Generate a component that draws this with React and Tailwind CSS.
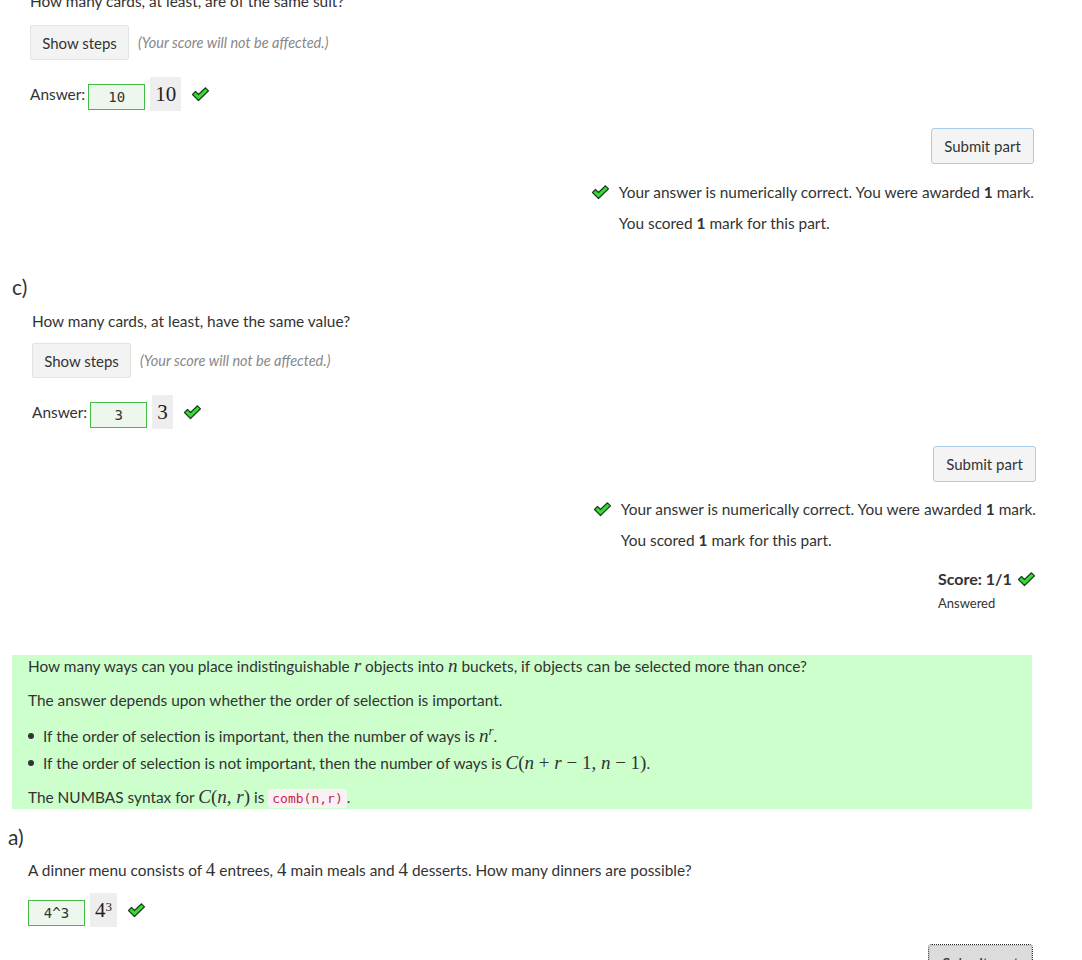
import React from 'react';

function Tick({ className = '' }) {
  return (
    <svg width="19" height="15" viewBox="0 0 19 15" className={className}>
      <polygon
        points="1.5,7.5 4.5,4.5 7.5,7.5 14.5,0.8 17.5,3.8 7.5,13.5"
        fill="#33dd33"
        stroke="#1d3d1d"
        strokeWidth="1.2"
        strokeLinejoin="round"
      />
    </svg>
  );
}

function M({ children }) {
  return <span className="font-['Liberation_Serif',serif] text-[19px] italic leading-none">{children}</span>;
}

function N({ children }) {
  return <span className="font-['Liberation_Serif',serif] text-[19px] leading-none">{children}</span>;
}

function ShowSteps() {
  return (
    <div className="flex items-center">
      <button className="h-[35px] w-[99px] rounded-[2px] border border-[#e3e3e3] bg-[#f3f3f3] text-[15px] text-[#333]">Show steps</button>
      <span className="ml-[9px] text-[14.5px] italic text-[#888]">(Your score will not be affected.)</span>
    </div>
  );
}

function AnswerRow({ value, shown, label = true }) {
  return (
    <div className="flex h-[34px] items-center">
      {label && <span className="mr-[3px]">Answer:</span>}
      <div className="mt-[6px] flex h-[26px] w-[57px] items-center justify-center border border-[#44bb44] bg-[#eef7ee] font-['DejaVu_Sans_Mono',monospace] text-[14px] text-[#333]">
        {value}
      </div>
      <div className="ml-[5px] flex h-[34px] items-center bg-[#eeeeee] px-[5px] font-['Liberation_Serif',serif] text-[21px] text-[#222]">
        {shown}
      </div>
      <Tick className="ml-[10px] mt-[1px]" />
    </div>
  );
}

function SubmitBtn() {
  return (
    <div className="flex justify-end">
      <button className="h-[36px] w-[103px] rounded-[3px] border border-[#a9cde8] bg-[#f4f4f4] text-[15px] text-[#333]">Submit part</button>
    </div>
  );
}

function Feedback() {
  return (
    <div className="flex justify-end">
      <div className="leading-[22px]">
        <div className="flex items-center">
          <Tick className="mr-[9px]" />
          <span>Your answer is numerically correct. You were awarded <b>1</b> mark.</span>
        </div>
        <div className="mt-[9px] pl-[28px]">You scored <b>1</b> mark for this part.</div>
      </div>
    </div>
  );
}

export default function App() {
  return (
    <div className="min-h-[960px] overflow-hidden bg-white font-['Source_Sans_Pro',Lato,sans-serif] text-[15.4px] leading-[22px] text-[#333]">
      {/* part b */}
      <div className="ml-[30px] mt-[-10px] w-[1004px]">
        <p>How many cards, at least, are of the same suit?</p>
        <div className="mt-[13px]"><ShowSteps /></div>
        <div className="mt-[17px]"><AnswerRow value="10" shown="10" /></div>
        <div className="mt-[17px]"><SubmitBtn /></div>
        <div className="mt-[17px]"><Feedback /></div>
      </div>

      {/* part c */}
      <div className="ml-[12px] mt-[39px] text-[21px] leading-[28px]">c)</div>
      <div className="ml-[32px] w-[1004px]">
        <p className="mt-[9px]">How many cards, at least, have the same value?</p>
        <div className="mt-[11px]"><ShowSteps /></div>
        <div className="mt-[17px]"><AnswerRow value="3" shown="3" /></div>
        <div className="mt-[17px]"><SubmitBtn /></div>
        <div className="mt-[16px]"><Feedback /></div>
        <div className="mt-[17px] flex justify-end">
          <div className="w-[98px]">
            <div className="flex items-center justify-between">
              <span className="text-[16px] font-bold">Score: 1/1</span>
              <Tick />
            </div>
            <div className="mt-[4px] text-[13px] leading-[18px]">Answered</div>
          </div>
        </div>
      </div>

      {/* advice / statement */}
      <div className="ml-[12px] mt-[43px] w-[1020px] bg-[#ccffcc] pb-[1px] pl-[16px]">
        <p className="h-[22px]">
          How many ways can you place indistinguishable <M>r</M> objects into <M>n</M> buckets, if objects can be selected more than once?
        </p>
        <p className="mt-[12px] h-[22px]">The answer depends upon whether the order of selection is important.</p>
        <ul className="mt-[11px]">
          <li className="flex h-[27px] items-center">
            <span className="mr-[9px] inline-block h-[6px] w-[6px] rounded-full bg-[#333]"></span>
            <span>If the order of selection is important, then the number of ways is <M>n</M><sup className="font-['Liberation_Serif',serif] text-[13px] italic">r</sup>.</span>
          </li>
          <li className="flex h-[27px] items-center">
            <span className="mr-[9px] inline-block h-[6px] w-[6px] rounded-full bg-[#333]"></span>
            <span>If the order of selection is not important, then the number of ways is <M>C</M><N>(</N><M>n</M><N> + </N><M>r</M><N> − 1, </N><M>n</M><N> − 1)</N>.</span>
          </li>
        </ul>
        <p className="mt-[10px] h-[22px]">
          The NUMBAS syntax for <M>C</M><N>(</N><M>n</M><N>, </N><M>r</M><N>)</N> is{' '}
          <code className="rounded-[3px] bg-[#f9f2f4] px-[4px] py-[2px] font-['DejaVu_Sans_Mono',monospace] text-[13px] text-[#c7254e]">comb(n,r)</code>.
        </p>
      </div>

      {/* part a */}
      <div className="ml-[8px] mt-[14px] text-[21px] leading-[28px]">a)</div>
      <div className="ml-[28px] w-[1004px]">
        <p className="mt-[8px] h-[22px]">
          A dinner menu consists of <N>4</N> entrees, <N>4</N> main meals and <N>4</N> desserts. How many dinners are possible?
        </p>
        <div className="mt-[12px]">
          <AnswerRow value="4^3" shown={<span>4<sup className="text-[13px]">3</sup></span>} label={false} />
        </div>
        <div className="mt-[18px] flex justify-end">
          <button className="h-[36px] w-[103px] rounded-[3px] border border-[#a9cde8] bg-[#dcdcdc] text-[15px] text-[#333] outline-1 outline-[#222] outline-dotted">Submit part</button>
        </div>
      </div>
    </div>
  );
}
